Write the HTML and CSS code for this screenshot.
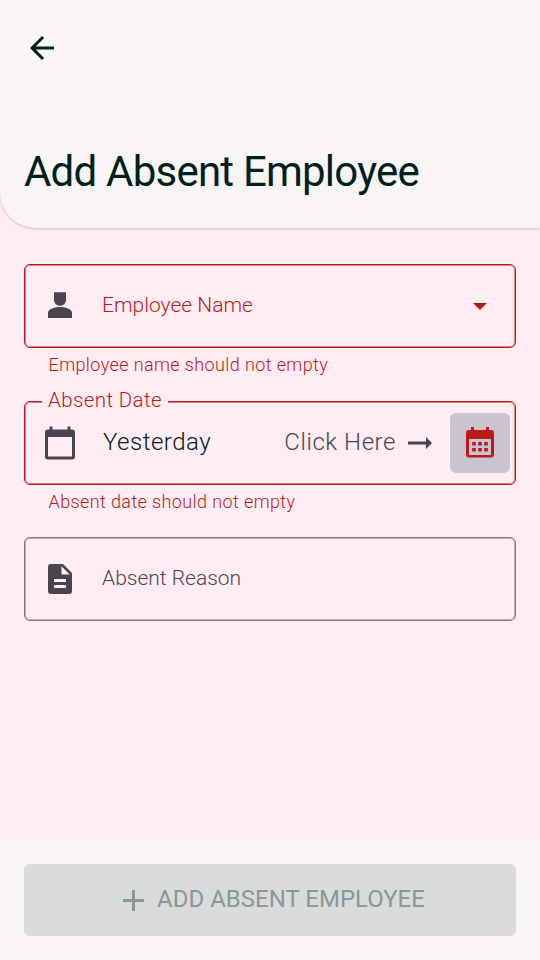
FILE: index.html
```html
<!DOCTYPE html>
<html lang="en">
<head>
<meta charset="utf-8">
<title>Add Absent Employee</title>
<link rel="stylesheet" href="styles.css">
</head>
<body>
<header class="top">
  <svg class="back" viewBox="0 0 24 24"><path d="M20 11H7.800l5.600-5.600L12 4l-8 8 8 8 1.400-1.400L7.800 13H20z"/></svg>
  <h1>Add Absent Employee</h1>
</header>
<main>
  <div class="field error">
    <svg class="lead" viewBox="0 0 36 36"><path d="M12 4.600q1-1.200 2 0 1-1.200 2 0 1-1.200 2 0 1-1.200 2 0 1-1.200 2 0 1-1.200 2 0v7.400c0 3.400-2.700 5.800-6 5.800s-6-2.400-6-5.800zM6 30v-4.800c0-3.900 5.500-6.200 12-6.200s12 2.300 12 6.200V30z"/></svg>
    <span class="label">Employee Name</span>
    <svg class="caret" viewBox="0 0 14 7"><path d="M0 0h14L7 7z"/></svg>
  </div>
  <p class="help">Employee name should not empty</p>
  <div class="field error date">
    <span class="legend">Absent Date</span>
    <svg class="lead" viewBox="0 0 36 36"><path fill-rule="evenodd" d="M7.500 1.500h3v3h15v-3h3v3H30a3 3 0 0 1 3 3v24a3 3 0 0 1-3 3H6a3 3 0 0 1-3-3v-24a3 3 0 0 1 3-3h1.500zM6 12v19.500h24V12z"/></svg>
    <span class="value">Yesterday</span>
    <span class="hint">Click Here</span>
    <svg class="go" viewBox="0 0 24 12"><path d="M0 4.500h18V0l6 6-6 6V7.500H0z"/></svg>
    <span class="chip"><svg viewBox="0 0 28 31"><path fill-rule="evenodd" d="M5 0h3v3h12V0h3v3h2a3 3 0 0 1 3 3v21.500a3 3 0 0 1-3 3H3a3 3 0 0 1-3-3V6a3 3 0 0 1 3-3h2zM3 12v16h22V12zM6.200 15h3.600v3.600H6.200zm6 0h3.600v3.600h-3.600zm6 0h3.600v3.600h-3.600zM6.200 21h3.600v3.600H6.200zm6 0h3.600v3.600h-3.600zm6 0h3.600v3.600h-3.600z"/></svg></span>
  </div>
  <p class="help last">Absent date should not empty</p>
  <div class="field reason">
    <svg class="lead" viewBox="0 0 36 36"><path fill-rule="evenodd" d="M9 3h12l9 9v18a3 3 0 0 1-3 3H9a3 3 0 0 1-3-3V6a3 3 0 0 1 3-3zm10.500 2.300v8.200h8.200zM12 18v3h12v-3zm0 6v3h12v-3z"/></svg>
    <span class="label">Absent Reason</span>
  </div>
</main>
<footer>
  <button disabled><svg viewBox="0 0 21 21"><path d="M9 0h3v9h9v3h-9v9H9v-9H0V9h9z"/></svg><span>ADD ABSENT EMPLOYEE</span></button>
</footer>
</body>
</html>
```
FILE: styles.css
```css
* { box-sizing: border-box; }
body {
  margin: 0;
  height: 960px;
  display: flex;
  flex-direction: column;
  background: #ffedf3;
  color: #00201a;
  font-family: Roboto, "Liberation Sans", sans-serif;
  font-weight: 300;
  white-space: nowrap;
}
svg { display: block; flex: none; fill: currentColor; }
.top {
  height: 228px;
  padding: 30px 24px 0;
  background: #f9f5f7;
  border-bottom-left-radius: 36px;
  box-shadow: 0 1px 3px rgba(0, 0, 0, .2);
}
.back { width: 36px; height: 36px; }
h1 { margin: 81px 0 0; font-size: 42px; line-height: 50px; font-weight: 400; letter-spacing: -.780px; }
main { flex: 1; padding: 36px 24px 0; }
.field {
  position: relative;
  height: 84px;
  display: flex;
  align-items: center;
  padding: 0 17px;
  border: 1px solid #79747e;
  border-radius: 6px;
  box-shadow: inset 0 0 0 1px rgba(121, 116, 126, .5);
  color: #49454f;
}
.error { border-color: #ba1a1a; box-shadow: inset 0 0 0 1px rgba(186, 26, 26, .5); }
.lead { width: 36px; height: 36px; margin-right: 24px; }
.label { padding-bottom: 2px; font-size: 21px; }
.error .label { color: #ba1a1a; }
.caret { width: 14px; height: 7px; margin: 1px 11px 0 auto; color: #ba1a1a; }
.help { margin: 0; padding-left: 24.500px; height: 53px; font-size: 18px; line-height: 34px; letter-spacing: .390px; color: #ba1a1a; }
.help.last { height: 52px; }
.legend {
  position: absolute;
  left: 17px;
  top: -17px;
  padding: 0 6px;
  font-size: 20.500px;
  line-height: 30px;
  letter-spacing: .390px;
  background: #ffedf3;
  color: #ba1a1a;
}
.date { padding-right: 5px; padding-bottom: 1px; }
.value { padding: 0 0 1px 1px; font-size: 24px; letter-spacing: .500px; color: #00201a; }
.hint { margin-left: auto; padding-bottom: 1px; font-size: 24px; letter-spacing: .560px; }
.go { width: 24px; height: 12px; margin: 0 18px 0 12px; }
.chip { width: 60px; height: 60px; display: grid; place-items: center; border-radius: 6px; background: #cac4d0; color: #ba1a1a; }
.chip svg { width: 28px; height: 31px; }
footer { height: 120px; padding: 24px; background: #f9f5f7; }
button {
  width: 100%;
  height: 72px;
  display: flex;
  align-items: center;
  justify-content: center;
  gap: 13px;
  padding: 0 0 0 8px;
  border: 0;
  border-radius: 6px;
  background: #dadcdb;
  color: #8a9793;
  font-family: inherit;
  font-size: 24px;
  font-weight: 400;
}
button span { padding-bottom: 2px; }
button svg { width: 21px; height: 21px; }
```
